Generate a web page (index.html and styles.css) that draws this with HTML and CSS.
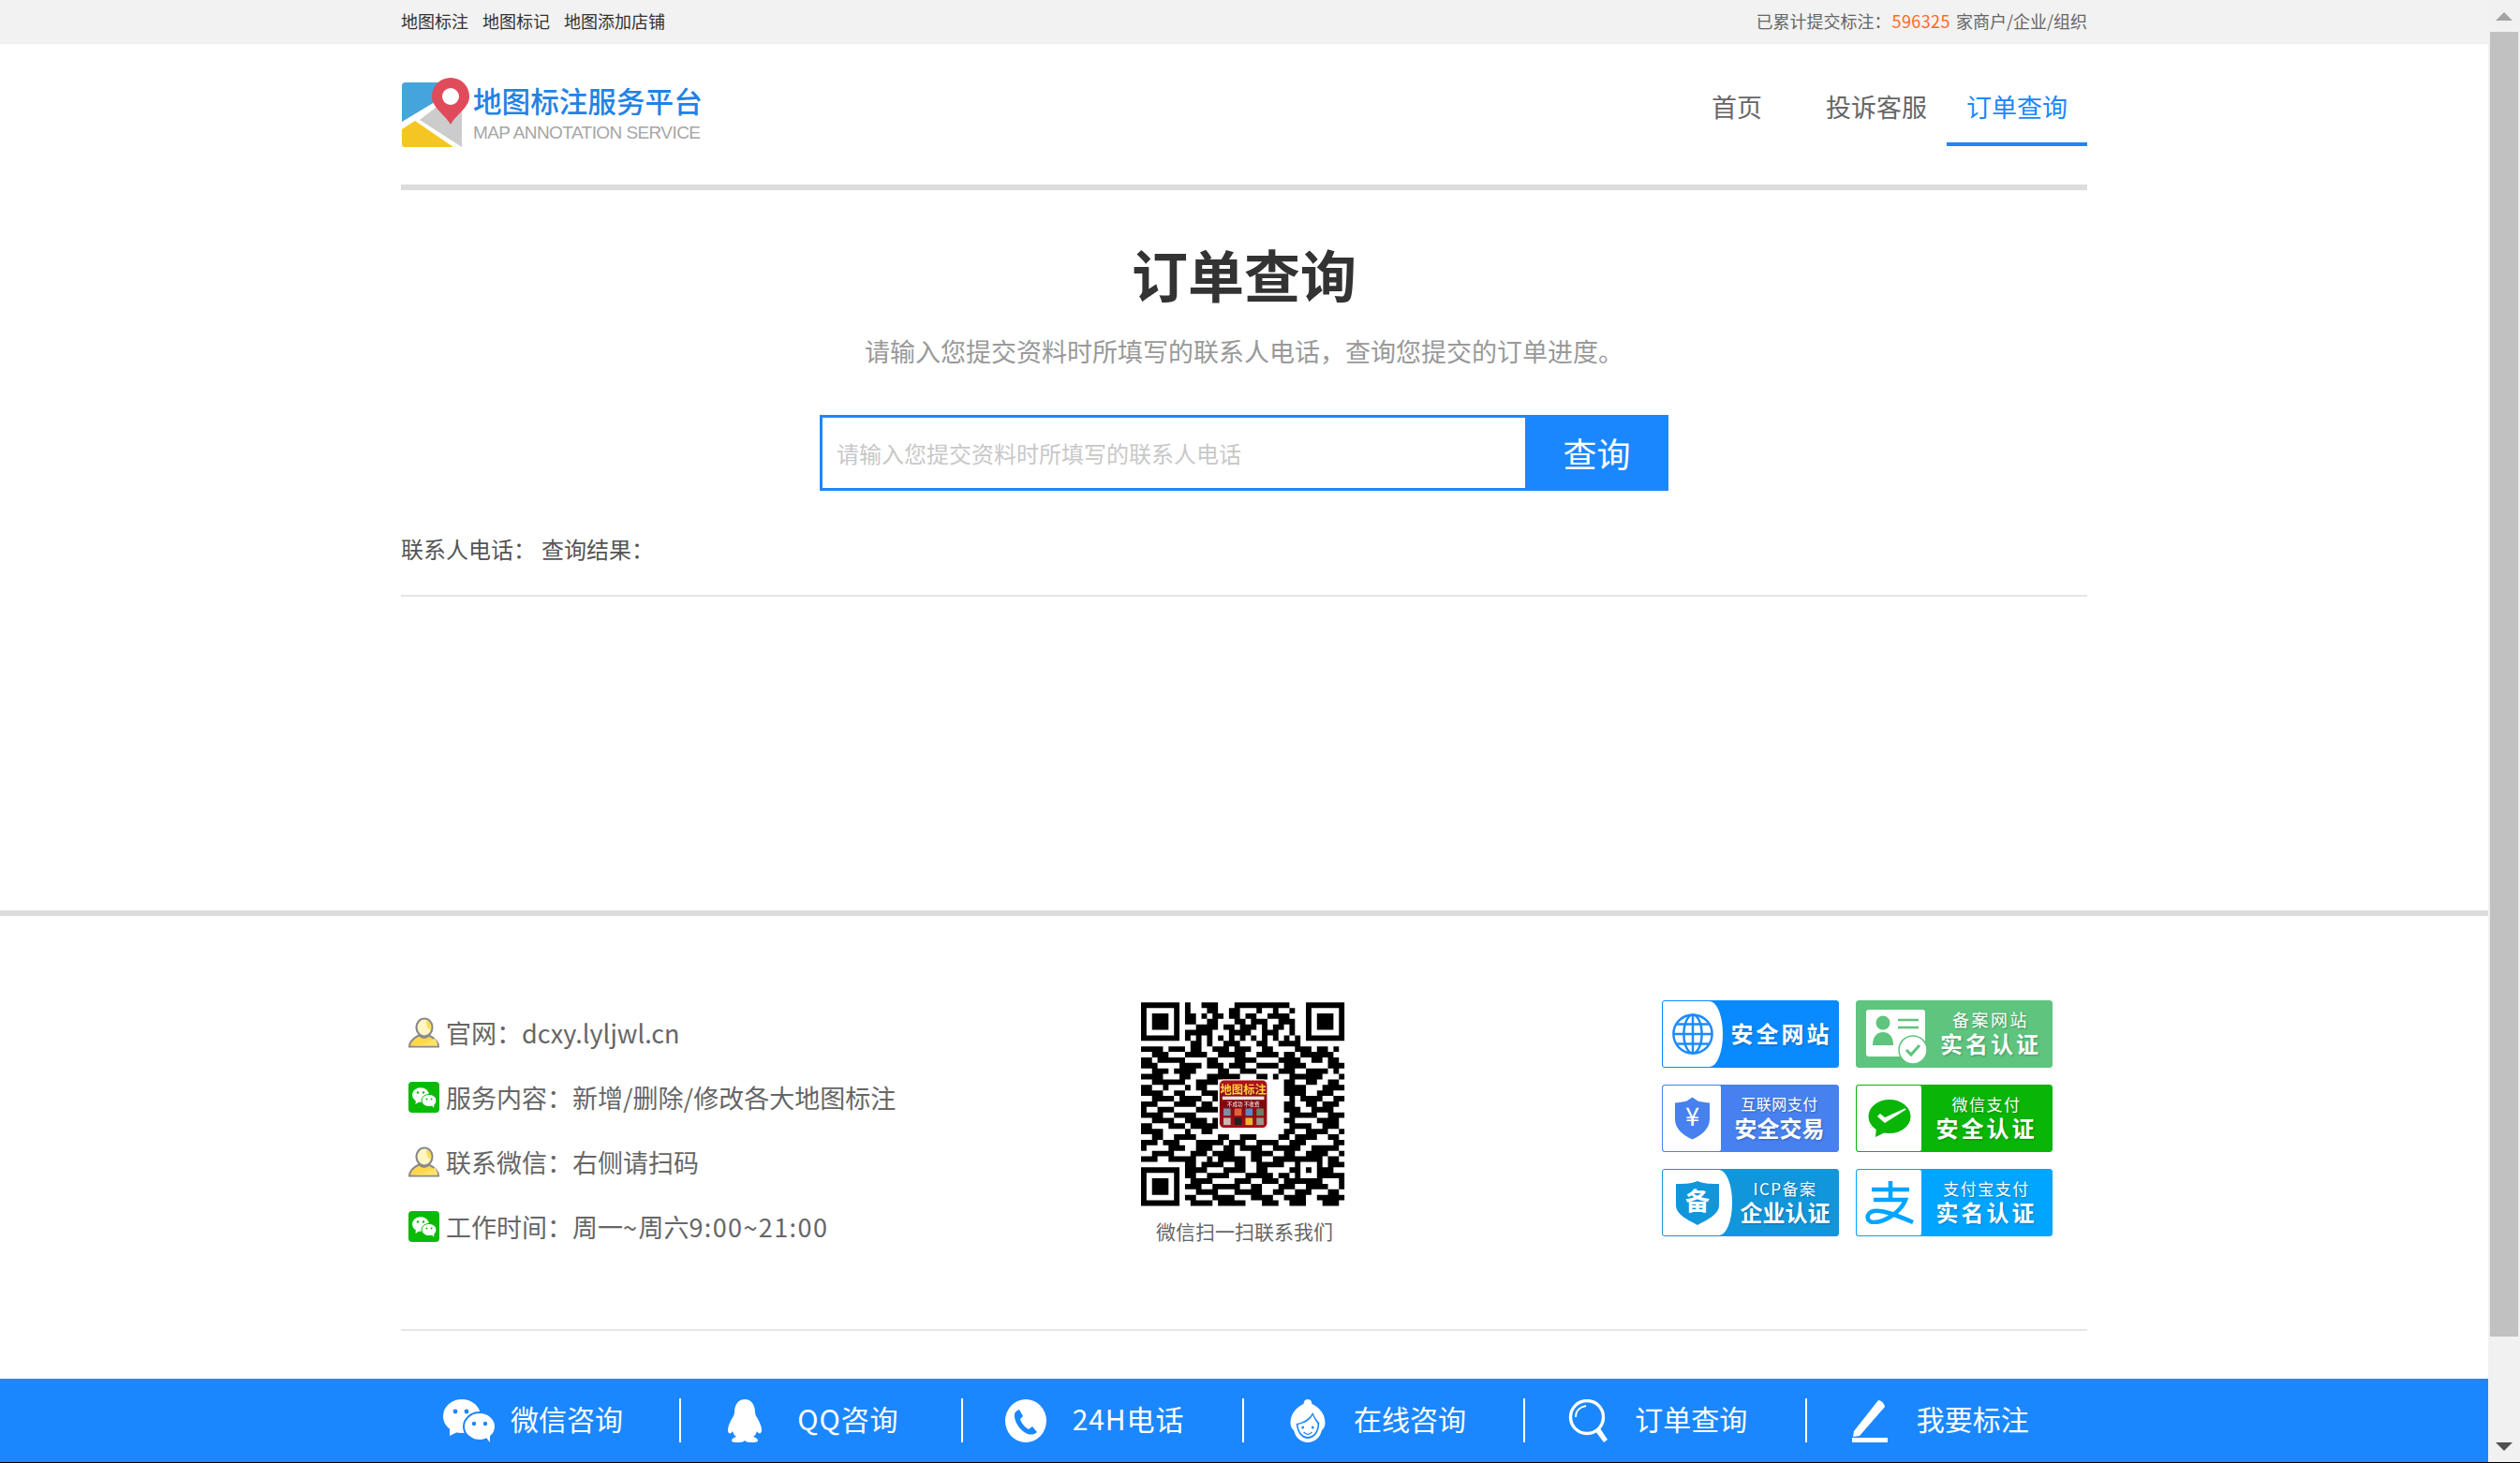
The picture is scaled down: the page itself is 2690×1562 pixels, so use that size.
FILE: index.html
```html
<!DOCTYPE html>
<html>
    <head>
        <title>订单查询</title>
        <meta charset="UTF-8" />
        <link rel="stylesheet" href="styles.css">
    </head>
    <body>
        <svg class="sprite">
            <symbol id="icon-person" viewBox="0 0 33 32">
                <path d="M1 31C1 25 5 22 11 19C15 22 19 22 22 19C28 22 32 25 32 31Z" fill="#ffd84d" stroke="#8a8a8a" stroke-width="2"/>
                <path d="M2 30C10 30 24 27 28 22C30 24 31 27 31 30Z" fill="#ffe36e"/>
                <ellipse cx="17" cy="10.5" rx="8.5" ry="9.5" fill="#fff6c4" stroke="#8a8a8a" stroke-width="2.2"/>
                <path d="M19 3C23 4 25 8 24 13C21 13 19 8 19 3Z" fill="#ffdc52"/>
            </symbol>
            <symbol id="icon-wechat" viewBox="0 0 33 33">
                <rect width="33" height="33" rx="4" fill="#09bb07"/>
                <ellipse cx="13" cy="14" rx="9" ry="7.8" fill="#fff"/>
                <path d="M8 19L7.5 24L12 21Z" fill="#fff"/>
                <circle cx="10" cy="11.5" r="1.2" fill="#09bb07"/>
                <circle cx="16" cy="11.5" r="1.2" fill="#09bb07"/>
                <ellipse cx="22" cy="20" rx="8" ry="6.6" fill="#fff" stroke="#09bb07" stroke-width="1"/>
                <path d="M25 25L27 28L27.5 24Z" fill="#fff"/>
                <circle cx="19.5" cy="18.5" r="1" fill="#09bb07"/>
                <circle cx="24.5" cy="18.5" r="1" fill="#09bb07"/>
            </symbol>
        </svg>

        <div class="window">
            <div class="page">
                <div class="topbar">
                    <div class="wrap topbar-inner">
                        <div class="topbar-links">
                            <a>地图标注</a>
                            <a>地图标记</a>
                            <a>地图添加店铺</a>
                        </div>
                        <div class="topbar-count">已累计提交标注：<span class="count-num">596325</span> 家商户/企业/组织</div>
                    </div>
                </div>

                <div class="wrap header">
                    <div class="logo">
                        <svg class="logo-mark" viewBox="0 0 74 76">
                            <path d="M1 9Q1 5 5 5H46V20L1 47Z" fill="#45a4dc"/>
                            <path d="M20 45L42 28L65 20V74Z" fill="#cccccc"/>
                            <path d="M1 55L15 46L56 74H4Q1 74 1 71Z" fill="#f5c623"/>
                            <path d="M53 50C46 38 33 32 33 20A20 20 0 1 1 73 20C73 32 60 38 53 50Z" fill="#e04b5b"/>
                            <circle cx="53" cy="20" r="9" fill="#fff"/>
                        </svg>
                        <div class="logo-text">
                            <div class="logo-cn">地图标注服务平台</div>
                            <div class="logo-en">MAP ANNOTATION SERVICE</div>
                        </div>
                    </div>
                    <div class="nav">
                        <a class="nav-item nav-home">首页</a>
                        <a class="nav-item">投诉客服</a>
                        <a class="nav-item active">订单查询</a>
                    </div>
                </div>
                <div class="wrap header-rule"></div>

                <div class="wrap query">
                    <h1>订单查询</h1>
                    <p class="query-tip">请输入您提交资料时所填写的联系人电话，查询您提交的订单进度。</p>
                    <div class="search">
                        <input class="search-input" type="text" placeholder="请输入您提交资料时所填写的联系人电话" />
                        <button class="search-button">查询</button>
                    </div>
                    <div class="result">
                        <span>联系人电话：</span>
                        <span>查询结果：</span>
                    </div>
                </div>

                <div class="footer">
                    <div class="wrap footer-info">
                        <ul class="contact">
                            <li><svg class="contact-icon"><use href="#icon-person"/></svg>官网：dcxy.lyljwl.cn</li>
                            <li><svg class="contact-icon"><use href="#icon-wechat"/></svg>服务内容：新增/删除/修改各大地图标注</li>
                            <li><svg class="contact-icon"><use href="#icon-person"/></svg>联系微信：右侧请扫码</li>
                            <li><svg class="contact-icon"><use href="#icon-wechat"/></svg><span>工作时间：周一<span class="digits">~</span>周六<span class="digits">9:00~21:00</span></span></li>
                        </ul>

                        <div class="qr">
                            <svg class="qr-code" viewBox="-0.17 -0.3 38 38">
                                <defs>
                                    <linearGradient id="qr-red" x1="0" y1="0" x2="0" y2="1">
                                        <stop offset="0" stop-color="#b3101a"/>
                                        <stop offset="0.5" stop-color="#7c0a10"/>
                                        <stop offset="1" stop-color="#a80f18"/>
                                    </linearGradient>
                                </defs>
                                <path id="qr-modules" fill="#000"/>
                                <rect x="14" y="14" width="9.2" height="9.2" rx="1" fill="#f4f4f4"/>
                                <rect x="14.3" y="14.2" width="8.6" height="8.6" rx="0.8" fill="url(#qr-red)"/>
                                <text class="qr-logo-title" x="18.6" y="16.6">地图标注</text>
                                <rect x="14.8" y="17.1" width="7.6" height="0.6" fill="#f3e3e3"/>
                                <text class="qr-logo-sub" x="18.6" y="18.8">不成功 不收费</text>
                                <rect x="15" y="19.3" width="1.3" height="1.3" fill="#7d8fa8"/>
                                <rect x="17" y="19.3" width="1.3" height="1.3" fill="#e2603a"/>
                                <rect x="19" y="19.3" width="1.3" height="1.3" fill="#5c88c4"/>
                                <rect x="21" y="19.3" width="1.3" height="1.3" fill="#6f7f66"/>
                                <rect x="15" y="21" width="1.3" height="1.3" fill="#c8b8b8"/>
                                <rect x="17" y="21" width="1.3" height="1.3" fill="#222"/>
                                <rect x="19" y="21" width="1.3" height="1.3" fill="#f0b429"/>
                                <rect x="21" y="21" width="1.3" height="1.3" fill="#9a9a8a"/>
                            </svg>
                            <div class="qr-caption">微信扫一扫联系我们</div>
                        </div>

                        <div class="badges">
                            <div class="badge badge-web">
                                <div class="badge-panel panel-curve">
                                    <svg class="badge-icon" viewBox="0 0 48 48" fill="none" stroke="#1a8cff" stroke-width="2.6">
                                        <circle cx="24" cy="24" r="21.5"/>
                                        <ellipse cx="24" cy="24" rx="10" ry="21.5"/>
                                        <path d="M24 2.5V45.5M3 24H45M6.5 13H41.5M6.5 35H41.5"/>
                                    </svg>
                                </div>
                                <div class="badge-text"><span class="badge-big">安全网站</span></div>
                            </div>
                            <div class="badge badge-name">
                                <div class="badge-panel">
                                    <svg class="badge-card" viewBox="0 0 66 60">
                                        <rect x="0" y="0" width="63" height="50" rx="3" fill="#fff"/>
                                        <circle cx="18" cy="14" r="7.5" fill="#5ec47e"/>
                                        <path d="M7 38C7 28 12 24 18 24S29 28 29 38Z" fill="#5ec47e"/>
                                        <path d="M34 11H56M34 19H56" stroke="#5ec47e" stroke-width="2.6"/>
                                        <circle cx="50" cy="43" r="15" fill="#fff" stroke="#5ec47e" stroke-width="1.5"/>
                                        <path d="M43 43L48 48L57 38" fill="none" stroke="#5ec47e" stroke-width="3"/>
                                    </svg>
                                </div>
                                <div class="badge-text">
                                    <span class="badge-small wide">备案网站</span>
                                    <span class="badge-big">实名认证</span>
                                </div>
                            </div>
                            <div class="badge badge-trade">
                                <div class="badge-panel">
                                    <svg class="badge-shield" viewBox="0 0 40 46">
                                        <path d="M20 0L26 4C30 5 35 6 39 6V24C39 34 30 42 20 46C10 42 1 34 1 24V6C5 6 10 5 14 4Z" fill="#4780ef"/>
                                        <text class="shield-sign" x="20" y="31">¥</text>
                                    </svg>
                                </div>
                                <div class="badge-text">
                                    <span class="badge-small narrow">互联网支付</span>
                                    <span class="badge-big tight">安全交易</span>
                                </div>
                            </div>
                            <div class="badge badge-wx">
                                <div class="badge-panel">
                                    <svg class="badge-bubble" viewBox="0 0 46 40">
                                        <ellipse cx="23" cy="18" rx="22.5" ry="18" fill="#09b507"/>
                                        <path d="M9 29L8 40L20 34Z" fill="#09b507"/>
                                        <path d="M11 18L18 24L40 10L18 20L13 16Z" fill="#fff" stroke="#fff" stroke-width="1.5"/>
                                    </svg>
                                </div>
                                <div class="badge-text">
                                    <span class="badge-small">微信支付</span>
                                    <span class="badge-big">安全认证</span>
                                </div>
                            </div>
                            <div class="badge badge-icp">
                                <div class="badge-panel panel-curve">
                                    <svg class="badge-shield icp" viewBox="0 0 46 47">
                                        <path d="M0 3C8 3 16 3 23 0C30 3 38 3 46 3V26C46 36 32 42 23 47C14 42 0 36 0 26Z" fill="#1296db"/>
                                        <text class="shield-char" x="23" y="31">备</text>
                                    </svg>
                                </div>
                                <div class="badge-text">
                                    <span class="badge-small">ICP备案</span>
                                    <span class="badge-big tight">企业认证</span>
                                </div>
                            </div>
                            <div class="badge badge-ali">
                                <div class="badge-panel">
                                    <svg class="badge-alipay" viewBox="-1 0 52 46" fill="none" stroke="#00a5ff" stroke-width="4.6">
                                        <path d="M6 9H46M26 0V20M8 20H42C38 31 22 44 8 44C0 44 -1 34 8 32C18 30 36 38 50 44"/>
                                    </svg>
                                </div>
                                <div class="badge-text">
                                    <span class="badge-small">支付宝支付</span>
                                    <span class="badge-big">实名认证</span>
                                </div>
                            </div>
                        </div>
                    </div>
                    <div class="wrap footer-rule"></div>
                </div>

                <div class="bar">
                    <div class="bar-inner">
                        <a class="bar-item">
                            <svg class="bar-icon icon-wx" viewBox="0 0 58 46">
                                <ellipse cx="21" cy="18" rx="20" ry="18" fill="#fff"/>
                                <path d="M8 30L8 39L18 34Z" fill="#fff"/>
                                <ellipse cx="40" cy="29" rx="17" ry="15" fill="#fff" stroke="#1b87ff" stroke-width="2"/>
                                <path d="M47 41L51 46L51 38Z" fill="#fff"/>
                                <circle cx="14" cy="13" r="2.4" fill="#1b87ff"/>
                                <circle cx="26" cy="13" r="2.4" fill="#1b87ff"/>
                                <circle cx="34" cy="26" r="2.2" fill="#1b87ff"/>
                                <circle cx="46" cy="26" r="2.2" fill="#1b87ff"/>
                            </svg>
                            <span>微信咨询</span>
                        </a>
                        <a class="bar-item">
                            <svg class="bar-icon icon-qq" viewBox="-3 0 46 46">
                                <path fill="#fff" d="M20 0C27 0 31 6 31 14c0 3 2 5 4 9 3 6 4 11 2 13-1 1-3 0-4-2-1 3-2 5-4 6 3 1 5 2 5 4s-4 2-8 2c-3 0-5-1-6-2-1 1-3 2-6 2-4 0-8 0-8-2s2-3 5-4c-2-1-3-3-4-6-1 2-3 3-4 2-2-2-1-7 2-13 2-4 4-6 4-9C9 6 13 0 20 0z"/>
                            </svg>
                            <span class="latin-label">QQ咨询</span>
                        </a>
                        <a class="bar-item">
                            <svg class="bar-icon" viewBox="0 0 46 46">
                                <ellipse cx="22" cy="23" rx="22" ry="23" fill="#fff"/>
                                <path fill="#1b87ff" d="M15 11L19 18L16 21C17 25 21 30 25 32L29 29L34 35C31 38 27 38 24 37C16 34 9 23 10 16C10 14 12 12 15 11Z"/>
                            </svg>
                            <span class="latin-label">24H电话</span>
                        </a>
                        <a class="bar-item">
                            <svg class="bar-icon" viewBox="0 0 46 46">
                                <g transform="translate(23 0) scale(0.88 1) translate(-23 0)">
                                    <path fill="#fff" d="M23 0C27 0 28 3 28 5C36 8 44 15 44 25C44 29 42 32 40 33C38 41 31 46 23 46C15 46 8 41 6 33C4 32 2 29 2 25C2 15 10 8 18 5C18 3 19 0 23 0Z"/>
                                    <path fill="#1b87ff" d="M9 26C17 25 25 21 29 14C31 19 35 23 37 25C37 36 30 42 23 42C16 42 10 36 9 26Z"/>
                                    <path fill="#fff" d="M11 27C18 26 25 23 29 17C31 21 33 24 35 26C35 35 29 40 23 40C17 40 12 35 11 27Z"/>
                                    <circle cx="17" cy="30" r="1.6" fill="#1b87ff"/>
                                    <circle cx="29" cy="30" r="1.6" fill="#1b87ff"/>
                                    <path d="M18 35C21 38 25 38 28 35" fill="none" stroke="#1b87ff" stroke-width="1.5"/>
                                </g>
                            </svg>
                            <span>在线咨询</span>
                        </a>
                        <a class="bar-item">
                            <svg class="bar-icon" viewBox="0 0 46 46">
                                <circle cx="21" cy="19" r="17.5" fill="none" stroke="#fff" stroke-width="3.4"/>
                                <path d="M9 19C9 12 14 8 20 7" fill="none" stroke="#fff" stroke-width="2"/>
                                <path d="M30 34L35 31L43 43L39 46Z" fill="#fff"/>
                            </svg>
                            <span>订单查询</span>
                        </a>
                        <a class="bar-item">
                            <svg class="bar-icon" viewBox="-3 0 46 46">
                                <path d="M2 34L28 1C31 1 34 4 35 8L8 39L1 40Z" fill="#fff"/>
                                <path d="M0 41H38V46H0Z" fill="#fff"/>
                            </svg>
                            <span>我要标注</span>
                        </a>
                    </div>
                </div>
            </div>

            <div class="scrollbar">
                <div class="scroll-btn"><i class="arrow-up"></i></div>
                <div class="scroll-thumb"></div>
                <div class="scroll-btn scroll-btn-end"><i class="arrow-down"></i></div>
            </div>
        </div>
        <script src="qr.js"></script>
    </body>
</html>
```

FILE: styles.css
```css
* {
    box-sizing: border-box;
}
html, body {
    height: 100%;
}
body {
    margin: 0;
    border-bottom: 1px solid #000;
    background-color: #fff;
    color: #666;
    font-family: "Noto Sans CJK SC", "Liberation Sans", sans-serif;
    overflow: hidden;
}
.sprite {
    display: none;
}
.window {
    display: flex;
    height: 100%;
}
.page {
    flex: 1;
    display: flex;
    flex-direction: column;
    min-width: 0;
}
.wrap {
    width: 1800px;
    margin: 0 auto;
}

/* top bar */
.topbar {
    height: 47px;
    background-color: #f2f2f2;
    border-bottom: 1px solid #eee;
    font-size: 18px;
}
.topbar-inner {
    display: flex;
    justify-content: space-between;
    align-items: center;
    height: 46px;
    padding-bottom: 3px;
}
.topbar-links {
    display: flex;
    gap: 15px;
    color: #333;
}
.count-num {
    color: #ff6a1f;
    margin: 0 2px 0 1px;
    letter-spacing: 0.4px;
}

/* header */
.header {
    display: flex;
    justify-content: space-between;
    align-items: flex-start;
    height: 150px;
}
.logo {
    display: flex;
    margin-top: 36px;
}
.logo-mark {
    width: 74px;
    height: 76px;
}
.logo-text {
    margin-left: 3px;
    width: 246px;
}
.logo-cn {
    margin-top: 6px;
    font-size: 30.6px;
    line-height: 36px;
    font-weight: 500;
    color: #1f83e6;
    white-space: nowrap;
}
.logo-en {
    margin-top: 7px;
    font-family: "Liberation Sans", sans-serif;
    font-size: 19px;
    line-height: 20px;
    letter-spacing: -0.58px;
    color: #a6a6a6;
    white-space: nowrap;
}
.nav {
    display: flex;
    margin-top: 29px;
}
.nav-item {
    padding: 4px 21px;
    font-size: 27px;
    line-height: 68px;
    color: #666;
    border-bottom: 4px solid transparent;
}
.nav-home {
    margin-right: 26px;
}
.nav-item.active {
    color: #1b87ff;
    border-bottom-color: #1b87ff;
}
.header-rule {
    height: 6px;
    background-color: #dcdcdc;
}

/* query */
.query {
    display: flex;
    flex-direction: column;
    align-items: center;
}
.query h1 {
    margin: 59px 0 0;
    font-size: 60px;
    line-height: 60px;
    font-weight: 700;
    color: #333;
}
.query-tip {
    margin: 33px 0 0;
    font-size: 27px;
    line-height: 40px;
    color: #999;
}
.search {
    display: flex;
    width: 906px;
    height: 81px;
    margin-top: 48px;
}
.search-input {
    flex: 1;
    min-width: 0;
    padding: 0 15px;
    border: 3px solid #1b87ff;
    border-right: none;
    outline: none;
    font-family: inherit;
    font-size: 24px;
}
.search-input::placeholder {
    color: #c8c8c8;
}
.search-button {
    width: 153px;
    border: none;
    background-color: #1b87ff;
    color: #fff;
    font-family: inherit;
    font-size: 36px;
    line-height: 81px;
    padding: 0;
}
.result {
    align-self: stretch;
    display: flex;
    gap: 6px;
    margin-top: 44px;
    padding-bottom: 31px;
    border-bottom: 2px solid #e5e5e5;
    font-size: 24px;
    line-height: 36px;
    color: #555;
}

/* footer */
.footer {
    margin-top: auto;
    border-top: 6px solid #dcdcdc;
}
.footer-info {
    display: grid;
    grid-template-columns: 789px 557px 1fr;
    padding-top: 90px;
    height: 441px;
}
.contact {
    list-style: none;
    margin: 0;
    padding: 0 0 0 8px;
    font-size: 27px;
    color: #666;
}
.contact li {
    display: flex;
    align-items: center;
    gap: 7px;
    height: 69px;
    white-space: nowrap;
}
.contact-icon {
    width: 33px;
    height: 33px;
    flex: none;
}
.digits {
    letter-spacing: 1.4px;
}
.qr {
    width: 223px;
}
.qr-code {
    display: block;
    width: 223px;
    height: 224px;
    filter: blur(0.4px);
}
.qr-logo-title {
    font-size: 2.1px;
    font-weight: 700;
    fill: #ffd23c;
    text-anchor: middle;
}
.qr-logo-sub {
    font-size: 0.95px;
    fill: #fff;
    text-anchor: middle;
}
.qr-caption {
    margin-top: 7px;
    font-size: 21px;
    line-height: 30px;
    text-align: center;
    white-space: nowrap;
    color: #666;
}
.badges {
    display: grid;
    grid-template-columns: 189px 210px;
    grid-auto-rows: 72px;
    gap: 18px;
    align-content: start;
}
.badge {
    display: flex;
    border: 1.5px solid;
    border-radius: 3px;
    color: #fff;
    overflow: hidden;
}
.badge-panel {
    flex: none;
    display: flex;
    align-items: center;
    justify-content: center;
    background-color: #fff;
    border-radius: 2px;
}
.panel-curve {
    border-radius: 0 14px 14px 0 / 0 50% 50% 0;
}
.badge-text {
    flex: 1;
    display: flex;
    flex-direction: column;
    align-items: center;
    justify-content: center;
    min-width: 0;
    padding-bottom: 3px;
    text-shadow: 1px 1px 2px rgba(0, 0, 0, 0.25);
    white-space: nowrap;
}
.badge-small {
    font-size: 17px;
    line-height: 23px;
    letter-spacing: 1.5px;
}
.badge-small.narrow {
    font-size: 16px;
    letter-spacing: 0.5px;
}
.badge-small.wide {
    font-size: 18px;
    letter-spacing: 2.5px;
}
.badge-big {
    font-size: 24px;
    line-height: 28px;
    letter-spacing: 3px;
    font-weight: 700;
}
.badge-big.tight {
    letter-spacing: 0;
}
.badge-web {
    background-color: #0a8aff;
    border-color: #0a8aff;
}
.badge-web .badge-panel {
    width: 64px;
}
.badge-web .badge-text {
    padding-left: 2px;
}
.badge-name {
    background-color: #5ec47e;
    border-color: #5ec47e;
}
.badge-name .badge-panel {
    width: 78px;
    background-color: transparent;
    justify-content: flex-start;
    align-items: flex-start;
    padding: 9px 0 0 10px;
}
.badge-trade {
    background-color: #4780ef;
    border-color: #4780ef;
}
.badge-trade .badge-panel {
    width: 62px;
}
.badge-wx {
    background-color: #09b507;
    border-color: #09b507;
}
.badge-wx .badge-panel {
    width: 69px;
}
.badge-icp {
    background-color: #1296db;
    border-color: #1296db;
}
.badge-icp .badge-panel {
    width: 74px;
}
.badge-ali {
    background-color: #00a5ff;
    border-color: #00a5ff;
}
.badge-ali .badge-panel {
    width: 69px;
}
.badge-icon {
    width: 46px;
    height: 46px;
}
.badge-card {
    width: 66px;
    height: 60px;
}
.badge-shield {
    width: 39px;
    height: 46px;
}
.badge-shield.icp {
    width: 46px;
    height: 47px;
}
.badge-bubble {
    width: 46px;
    height: 40px;
}
.badge-alipay {
    width: 52px;
    height: 46px;
}
.shield-sign {
    font-size: 28px;
    fill: #fff;
    text-anchor: middle;
}
.shield-char {
    font-size: 26px;
    font-weight: 700;
    fill: #fff;
    text-anchor: middle;
}
.footer-rule {
    height: 2px;
    background-color: #e6e6e6;
}

/* bottom bar */
.bar {
    margin-top: 51px;
    height: 89px;
    background-color: #1b87ff;
}
.bar-inner {
    display: flex;
    align-items: center;
    width: 1800px;
    height: 100%;
    margin-left: 427px;
}
.bar-item {
    flex: 1;
    display: flex;
    align-items: center;
    height: 47px;
    padding-left: 45px;
    border-right: 2px solid #fff;
    color: #fff;
    font-size: 30px;
}
.bar-item span {
    margin-bottom: 5px;
}
.bar-item:last-child {
    border-right: none;
}
.bar-icon {
    flex: none;
    width: 46px;
    height: 46px;
    margin-right: 26px;
}
.bar-icon.icon-wx {
    width: 58px;
    margin-right: 15px;
}
.bar-icon.icon-qq {
    margin-right: 33px;
}
.latin-label {
    letter-spacing: 0.9px;
}

/* scrollbar */
.scrollbar {
    flex: none;
    display: flex;
    flex-direction: column;
    align-items: center;
    width: 34px;
    background-color: #f1f1f1;
}
.scroll-btn {
    flex: none;
    display: flex;
    align-items: center;
    justify-content: center;
    height: 34px;
    width: 100%;
}
.scroll-btn-end {
    margin-top: auto;
}
.scroll-thumb {
    width: 30px;
    height: 1393px;
    background-color: #c1c1c1;
}
.arrow-up {
    border-left: 9px solid transparent;
    border-right: 9px solid transparent;
    border-bottom: 9px solid #a3a3a3;
}
.arrow-down {
    border-left: 9px solid transparent;
    border-right: 9px solid transparent;
    border-top: 9px solid #505050;
}
```

FILE: qr.js
```js
const rows = [
    "1111111010011100011111111110001111111",
    "1000001010001100110001001001001000001",
    "1011101011010110110110011110001011101",
    "1011101011001100011011100111001011101",
    "1011101000111101101110101101001011101",
    "1000001011111000111100111001001000001",
    "1111111010101010101010101010101111111",
    "0000000001101001110001100111100000000",
    "1111011101100111011100110000111011010",
    "0011100011110011111001111011011111100",
    "1101111100001100011110000111100110110",
    "1110000111101110111001111011110000111",
    "0011101111000011001110000111001111010",
    "1111000110001111110001101001111110001",
    "0011111100111100000000000011001100110",
    "1100100010110000000000000011110001111",
    "1111001100011100000000000011110011100",
    "0011110111100100000000000001011110011",
    "1110001111011000000000000011001101110",
    "1001110000111100000000000011100111100",
    "1111001111000000000000000001111100111",
    "0011110011110100000000000011000011110",
    "1100011101111100000000000001111001110",
    "1111000010011000000000000011001111001",
    "0011001111000011001110000110111100110",
    "1110111000111110111001111001110000011",
    "1000011100111001101111001111100111110",
    "0011110001110111100011110011001111001",
    "1110011111001011111011001111111110110",
    "0000000011011110011001111100100010111",
    "1111111011110001111001100001101011100",
    "1000001011001111000111110110100011111",
    "1011101001111000011100111011111110001",
    "1011101011100111110011000111001111001",
    "1011101000111100011111001100111000110",
    "1000001011000111100011110011110011111",
    "1111111001111011111000111001110001110"
];

let d = "";
rows.forEach((row, y) => {
    [...row].forEach((cell, x) => {
        if (cell === "1") {
            d += `M${x} ${y}h1v1h-1z`;
        }
    });
});
document.getElementById("qr-modules").setAttribute("d", d);
```
